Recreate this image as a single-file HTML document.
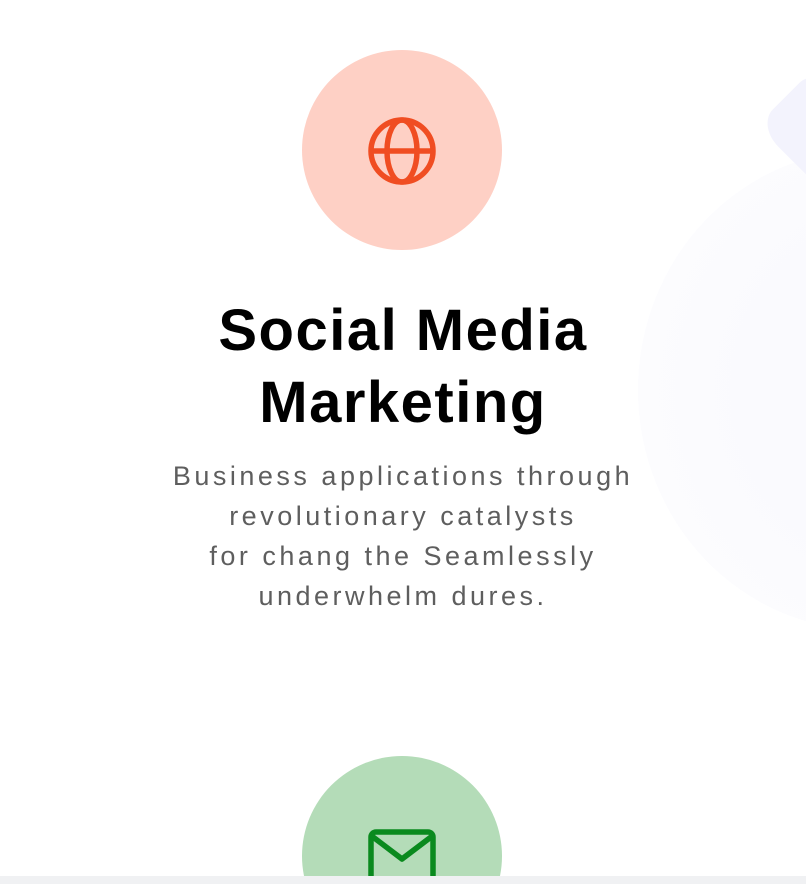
<!DOCTYPE html>
<html><head><meta charset="utf-8"><style>
html,body{margin:0;padding:0;width:806px;height:884px;overflow:hidden;}
body{position:relative;background:#fff;font-family:"Liberation Sans",sans-serif;}
.clip{position:absolute;left:0;top:0;width:806px;height:884px;overflow:hidden;}
.blob{position:absolute;left:638px;top:150px;width:460px;height:480px;border-radius:50%;background:radial-gradient(circle at 60% 50%,#f8f8fd 0%,#fbfbfe 60%,#fdfdff 100%);}
.dia{position:absolute;left:770px;top:80px;width:110px;height:110px;background:#f3f3fd;border-radius:30px;transform:rotate(45deg) scaleY(0.75);}
.circ{position:absolute;left:302px;width:200px;height:200px;border-radius:50%;}
.t{position:absolute;left:0;width:806px;text-align:center;}
h1{margin:0;font-size:58px;line-height:72px;font-weight:bold;color:#000;letter-spacing:1.5px;}
p{margin:0;font-size:27px;line-height:40px;color:#5e5e5e;letter-spacing:3.5px;}
.bar{position:absolute;left:0;top:876px;width:806px;height:8px;background:#f0f1f3;}
</style></head><body><div class="clip">
<div class="blob"></div>
<div class="dia"></div>
<div class="circ" style="top:50px;background:#fed0c5;"></div>
<svg style="position:absolute;left:368px;top:117px" width="68" height="68" viewBox="0 0 68 68" fill="none" stroke="#f04d22" stroke-width="5.5">
<circle cx="34" cy="34" r="31"/><ellipse cx="34" cy="34" rx="15" ry="31"/><line x1="3" y1="34" x2="65" y2="34"/></svg>
<div class="t" style="top:295px"><h1>Social Media<br>Marketing</h1></div>
<div class="t" style="top:456px"><p>Business applications through<br>revolutionary catalysts<br>for chang the Seamlessly<br>underwhelm dures.</p></div>
<div style="position:absolute;left:302px;top:756px;width:200px;height:120px;overflow:hidden;">
<div style="width:200px;height:200px;border-radius:50%;background:#b4dcb8;"></div>
<svg style="position:absolute;left:66px;top:73px" width="68" height="60" viewBox="0 0 68 60" fill="none" stroke="#0a8a1e" stroke-width="5.5" stroke-linejoin="round">
<rect x="3" y="3" width="62" height="56" rx="5"/><path d="M5 8 L34 30 L63 8"/></svg>
</div>
<div class="bar"></div>
</div></body></html>
